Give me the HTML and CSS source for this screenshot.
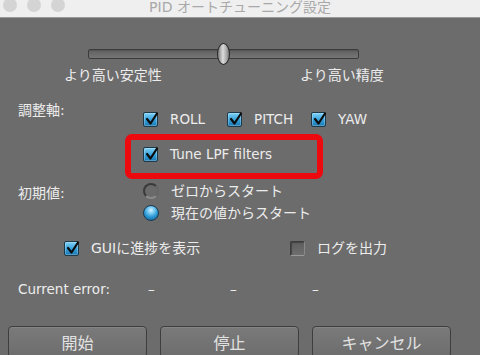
FILE: index.html
```html
<!DOCTYPE html>
<html lang="ja">
<head>
<meta charset="utf-8">
<title>PID オートチューニング設定</title>
<link rel="stylesheet" href="styles.css">
</head>
<body>
<div class="titlebar">
  <div class="lights"><span class="light"></span><span class="light"></span><span class="light"></span></div>
  <div class="title">PID オートチューニング設定</div>
  <div></div>
</div>
<div class="content">
  <div class="slider-row">
    <div class="slider">
      <div class="track"></div>
      <div class="knob" style="left: calc(50% - 7px)"></div>
    </div>
  </div>
  <div class="scale-labels">
    <span>より高い安定性</span>
    <span>より高い精度</span>
  </div>

  <div class="axis-row">
    <div class="row-label axis-label">調整軸:</div>
    <div class="axis-controls">
      <label class="check-item axis-item"><span class="cb on"><svg viewBox="0 0 15 15"><path d="M3 7 L6.5 11.5 L13 1.5"/></svg></span><span>ROLL</span></label>
      <label class="check-item axis-item"><span class="cb on"><svg viewBox="0 0 15 15"><path d="M3 7 L6.5 11.5 L13 1.5"/></svg></span><span>PITCH</span></label>
      <label class="check-item axis-item"><span class="cb on"><svg viewBox="0 0 15 15"><path d="M3 7 L6.5 11.5 L13 1.5"/></svg></span><span>YAW</span></label>
    </div>
  </div>

  <div class="lpf-row">
    <label class="check-item"><span class="cb on"><svg viewBox="0 0 15 15"><path d="M3 7 L6.5 11.5 L13 1.5"/></svg></span><span>Tune LPF filters</span></label>
    <div class="annotation"></div>
  </div>

  <div class="init-row">
    <div class="row-label init-label">初期値:</div>
    <div class="radios">
      <label class="check-item ja"><span class="radio"></span><span>ゼロからスタート</span></label>
      <label class="check-item ja"><span class="radio on"></span><span>現在の値からスタート</span></label>
    </div>
  </div>

  <div class="opt-row">
    <label class="check-item ja gui-item"><span class="cb on"><svg viewBox="0 0 15 15"><path d="M3 7 L6.5 11.5 L13 1.5"/></svg></span><span>GUIに進捗を表示</span></label>
    <label class="check-item ja"><span class="cb off"></span><span>ログを出力</span></label>
  </div>

  <div class="error-row">
    <div class="error-label">Current error:</div>
    <span class="dash">–</span>
    <span class="dash">–</span>
    <span class="dash">–</span>
  </div>

  <div class="buttons">
    <button class="btn">開始</button>
    <button class="btn">停止</button>
    <button class="btn">キャンセル</button>
  </div>
</div>
</body>
</html>
```

FILE: styles.css
```css
html, body {
  margin: 0;
  padding: 0;
}
body {
  width: 480px;
  height: 355px;
  overflow: hidden;
  background: #6c6c6c;
  font-family: "DejaVu Sans", "Noto Sans CJK JP", sans-serif;
  font-size: 13.5px;
  color: #ececec;
}

/* title bar */
.titlebar {
  height: 17px;
  background: #efefef;
  border-bottom: 1px solid #9a9a9a;
  display: grid;
  grid-template-columns: 1fr auto 1fr;
  overflow: hidden;
}
.lights {
  display: flex;
  gap: 10px;
  padding-left: 3px;
  margin-top: -2px;
}
.light {
  width: 14px;
  height: 14px;
  border-radius: 50%;
  background: #d4d4d4;
}
.title {
  font-size: 14px;
  line-height: 14px;
  color: #a8a8a8;
}

.content {
  display: flex;
  flex-direction: column;
}

/* slider */
.slider-row {
  margin-top: 25px;
  padding-left: 88px;
  height: 22px;
}
.slider {
  position: relative;
  width: 271px;
  height: 22px;
  display: flex;
  align-items: center;
}
.track {
  flex: 1;
  height: 10px;
  box-sizing: border-box;
  border: 1px solid #3c3c3c;
  border-radius: 2px;
  background: linear-gradient(#5f5f5f, #767676);
  box-shadow: inset 0 1px 0 #555555;
}
.knob {
  position: absolute;
  top: 0;
  width: 13px;
  height: 22px;
  box-sizing: border-box;
  border-radius: 50%;
  border: 1px solid #2a2a2a;
  background: linear-gradient(90deg, #7e7e7e, #dcdcdc 45%, #a4a4a4 80%, #7a7a7a);
}
.scale-labels {
  margin-top: 1px;
  height: 18px;
  line-height: 18px;
  padding-left: 64px;
  display: grid;
  grid-template-columns: 236px auto;
  font-size: 14px;
}

/* generic check / radio items */
.check-item {
  display: flex;
  align-items: center;
  gap: 12px;
  height: 18px;
  line-height: 18px;
}
.ja {
  font-size: 14px;
}
.cb {
  width: 15px;
  height: 15px;
  box-sizing: border-box;
  border-radius: 2px;
  flex: none;
  position: relative;
}
.cb.on {
  border: 1px solid #1d3a4c;
  background: linear-gradient(#7fd0f5, #33a0da 55%, #1b77b0);
  box-shadow: inset 0 0 0 1px rgba(255,255,255,0.25);
}
.cb svg {
  position: absolute;
  left: 0;
  top: -1px;
  width: 15px;
  height: 15px;
  overflow: visible;
}
.cb svg path {
  fill: none;
  stroke: #0c0c0c;
  stroke-width: 2.2;
  stroke-linecap: round;
  stroke-linejoin: round;
}
.cb.off {
  border: 1px solid #3c3c3c;
  border-right-color: #8a8a8a;
  border-bottom-color: #9a9a9a;
  background: linear-gradient(#5e5e5e, #6e6e6e);
  box-shadow: inset 1px 1px 1px #444;
}
.radio {
  width: 16px;
  height: 16px;
  box-sizing: border-box;
  border-radius: 50%;
  flex: none;
  border: 2px solid #3a3a3a;
  border-bottom-color: #8a8a8a;
  border-right-color: #666666;
  background: #6a6a6a;
}
.radio.on {
  border: 1px solid #1b3a4e;
  background: radial-gradient(circle at 50% 30%, #d8f3ff 0, #7fcdf3 25%, #2d9ad6 55%, #13659b 90%);
}

/* rows */
.row-label {
  width: 143px;
  padding-left: 18px;
  box-sizing: border-box;
  flex: none;
  font-size: 14px;
  line-height: 18px;
}
.axis-row {
  margin-top: 17px;
  height: 27px;
  display: flex;
}
.axis-controls {
  display: flex;
  margin-top: 9px;
}
.axis-item {
  width: 84px;
}
.lpf-row {
  position: relative;
  margin-top: 17px;
  padding-left: 143px;
}
.annotation {
  position: absolute;
  left: 125px;
  top: -11px;
  width: 198px;
  height: 45px;
  box-sizing: border-box;
  border: 6px solid #ec0a0e;
  border-radius: 7px;
}
.init-row {
  margin-top: 19px;
  display: flex;
}
.init-label {
  padding-top: 2px;
}
.radios {
  display: flex;
  flex-direction: column;
  gap: 4px;
}
.opt-row {
  margin-top: 17px;
  padding-left: 64px;
  display: flex;
}
.gui-item {
  width: 226px;
}
.error-row {
  margin-top: 23px;
  display: flex;
  height: 18px;
  line-height: 18px;
}
.error-label {
  width: 148px;
  padding-left: 18px;
  box-sizing: border-box;
}
.dash {
  width: 82px;
}

/* buttons */
.buttons {
  margin-top: 28px;
  padding-left: 8px;
  display: flex;
  gap: 13px;
}
.btn {
  width: 139px;
  height: 32px;
  box-sizing: border-box;
  border: 1px solid #3e3e3e;
  border-radius: 4px;
  background: linear-gradient(#7a7a7a, #6d6d6d);
  box-shadow: inset 0 1px 0 #858585;
  color: #e2e2e2;
  font-family: "DejaVu Sans", "Noto Sans CJK JP", sans-serif;
  font-size: 16px;
  padding: 0;
}
```
